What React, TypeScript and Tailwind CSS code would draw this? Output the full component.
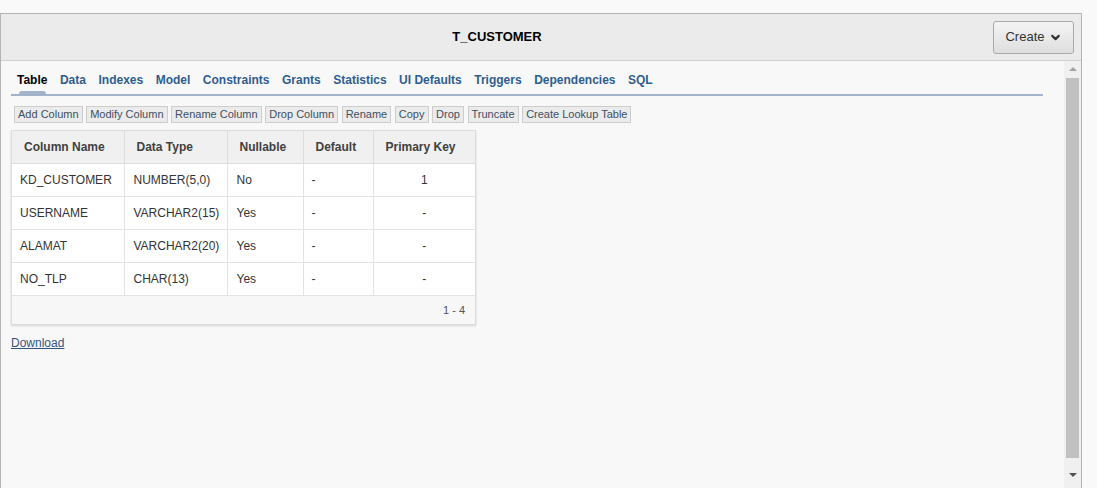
import { ChevronDown } from 'lucide-react';

const tabs = ['Table', 'Data', 'Indexes', 'Model', 'Constraints', 'Grants', 'Statistics', 'UI Defaults', 'Triggers', 'Dependencies', 'SQL'];
const actions = ['Add Column', 'Modify Column', 'Rename Column', 'Drop Column', 'Rename', 'Copy', 'Drop', 'Truncate', 'Create Lookup Table'];
const heads = ['Column Name', 'Data Type', 'Nullable', 'Default', 'Primary Key'];

const rows = [
  ['KD_CUSTOMER', 'NUMBER(5,0)', 'No', '-', '1'],
  ['USERNAME', 'VARCHAR2(15)', 'Yes', '-', '-'],
  ['ALAMAT', 'VARCHAR2(20)', 'Yes', '-', '-'],
  ['NO_TLP', 'CHAR(13)', 'Yes', '-', '-'],
];

function ColumnTable() {
  return (
    <div className="w-[465px] border border-[#dcdcdc] shadow-[0_1px_2px_rgba(0,0,0,0.15)] bg-white">
      <table className="w-full border-collapse text-[12px] text-[#333]">
        <thead>
          <tr className="h-[32px] bg-[#f0f0f0] border-b border-[#dcdcdc]">
            {heads.map((h, i) => (
              <th
                key={h}
                className={`text-left pl-3 font-bold text-[#404040] ${i > 0 ? 'border-l border-[#dcdcdc]' : ''} ${
                  i === 0 ? 'w-[112px]' : i === 1 ? 'w-[103px]' : i === 2 ? 'w-[76px]' : i === 3 ? 'w-[70px]' : ''
                }`}
              >
                {h}
              </th>
            ))}
          </tr>
        </thead>
        <tbody>
          {rows.map((r) => (
            <tr key={r[0]} className="h-[33px] border-b border-[#e3e3e3]">
              <td className="pl-2">{r[0]}</td>
              <td className="pl-[9px] border-l border-[#e3e3e3]">{r[1]}</td>
              <td className="pl-[9px] border-l border-[#e3e3e3]">{r[2]}</td>
              <td className="pl-2 border-l border-[#e3e3e3]">{r[3]}</td>
              <td className="text-center border-l border-[#e3e3e3]">{r[4]}</td>
            </tr>
          ))}
          <tr className="h-[29px] bg-[#f7f7f7]">
            <td colSpan={5} className="text-right pr-[10px] text-[11px] text-[#555]">1 - 4</td>
          </tr>
        </tbody>
      </table>
    </div>
  );
}

export default function App() {
  return (
    <div className="w-[1097px] h-[488px] bg-[#f9f9f9] pt-[13px] font-['Liberation_Sans',Arial,sans-serif]">
      <div className="w-[1082px] h-[475px] border border-[#b4b4b4] border-b-0 flex flex-col">
        <div className="h-[47px] bg-[#ebebeb] border-b border-[#cfcfcf] flex items-center shrink-0">
          <div className="flex-1 text-center text-[13px] font-bold text-black">T_CUSTOMER</div>
          <button className="mr-[7px] w-[81px] h-[33px] rounded-[3px] border border-[#a9a9a9] bg-gradient-to-b from-[#f4f4f4] to-[#dedede] flex items-center justify-center gap-1 text-[13px] text-[#333]">
            Create
            <ChevronDown size={13} strokeWidth={4} className="text-[#333]" />
          </button>
        </div>
        <div className="flex flex-1 min-h-0 bg-[#f8f8f8]">
          <div className="flex-1 pl-[10px] pt-[5px]">
            <div className="w-[1032px] border-b-2 border-[#a3b3c9] flex gap-[12.5px] pl-[6px] pt-[1px] h-[30px] items-start">
              {tabs.map((t, i) => (
                <div key={t} className="relative">
                  <span className={`text-[12px] font-bold ${i === 0 ? 'text-black' : 'text-[#2e5e91]'}`}>{t}</span>
                  {i === 0 && <div className="absolute left-[2px] top-[24px] w-[27px] h-[4px] rounded-t-[3px] bg-[#a3b3c9]" />}
                </div>
              ))}
            </div>
            <div className="flex gap-[3.6px] mt-[10px] ml-[3px]">
              {actions.map((a) => (
                <button key={a} className="h-[17px] px-[3px] border border-[#cdcdcd] bg-[#ebebeb] text-[11px] leading-[15px] text-[#3e4f63]">
                  {a}
                </button>
              ))}
            </div>
            <div className="mt-[7px]">
              <ColumnTable />
            </div>
            <div className="mt-[5px]">
              <span className="text-[12px] text-[#365480] underline">Download</span>
            </div>
          </div>
          <div className="w-[17px] bg-[#f0f0f0] flex flex-col items-center pt-[6px] pb-[11px]">
            <div className="w-0 h-0 border-l-[4px] border-r-[4px] border-b-[4px] border-l-transparent border-r-transparent border-b-[#a3a3a3]" />
            <div className="mt-[7px] w-[13px] flex-1 bg-[#c1c1c1]" />
            <div className="mt-[15px] w-0 h-0 border-l-[4px] border-r-[4px] border-t-[4px] border-l-transparent border-r-transparent border-t-[#505050]" />
          </div>
        </div>
      </div>
    </div>
  );
}
